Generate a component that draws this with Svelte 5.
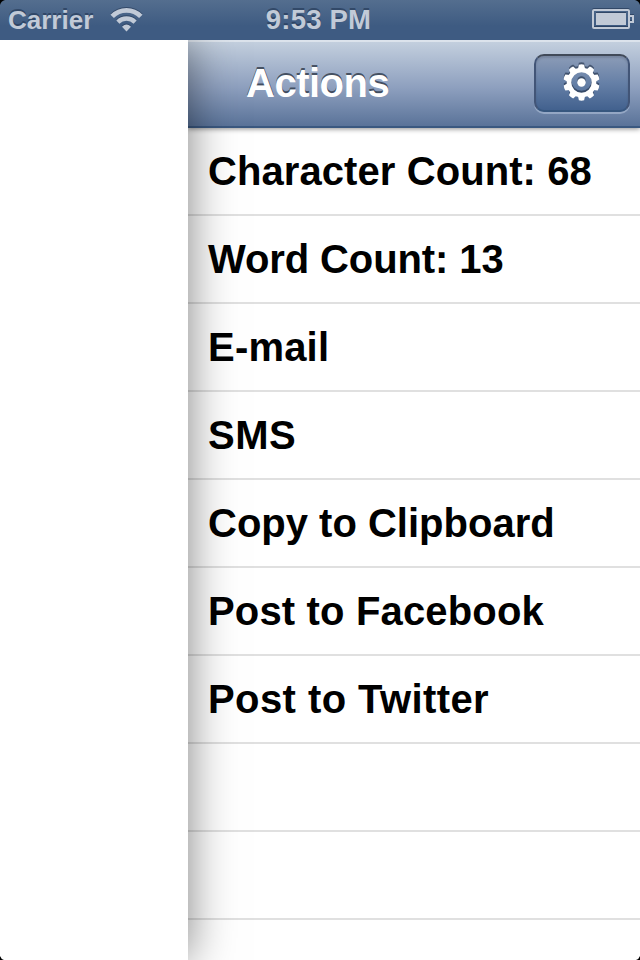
<script>
  const rows = [
    { label: 'Character Count: 68', spacing: 0.08 },
    { label: 'Word Count: 13', spacing: -0.1 },
    { label: 'E-mail', spacing: 0.2 },
    { label: 'SMS', spacing: 0.5 },
    { label: 'Copy to Clipboard', spacing: 0 },
    { label: 'Post to Facebook', spacing: 0.16 },
    { label: 'Post to Twitter', spacing: 0.42 },
    { label: '', spacing: 0 },
    { label: '', spacing: 0 },
    { label: '', spacing: 0 }
  ];
  const teeth = Array.from({ length: 10 }, (_, i) => i * 36);
</script>

<div class="screen">
  <header class="status">
    <div class="left">
      <span class="carrier">Carrier</span>
      <svg class="wifi" width="34" height="26" viewBox="0 0 34 26" fill="none" stroke="#c1cad7">
        <path d="M2.2 9.4A20 20 0 0 1 30.8 9.4" stroke-width="4.8" />
        <path d="M7.9 15.1A12.2 12.2 0 0 1 25.1 15.1" stroke-width="4.4" />
        <path d="M16.5 24.4L12 19.7Q16.5 15.4 21 19.7Z" fill="#c1cad7" stroke="none" />
      </svg>
    </div>
    <span class="time">9:53 PM</span>
    <svg class="battery" width="44" height="24" viewBox="0 0 44 24">
      <rect x="1" y="2" width="36" height="18" rx="1" fill="none" stroke="#c1cad7" stroke-width="2" />
      <rect x="4" y="5" width="30" height="12" fill="#c1cad7" />
      <path d="M38 8H41V14H38" fill="none" stroke="#c1cad7" stroke-width="2" />
    </svg>
  </header>

  <main class="body">
    <div class="front"></div>
    <section class="actions">
      <nav>
        <h1>Actions</h1>
        <button aria-label="Settings">
          <svg class="gear" width="40" height="40" viewBox="-19.5 -19.5 40 40">
            <circle r="12.5" fill="none" stroke="#fff" stroke-width="4.6" />
            {#each teeth as angle}
              <path d="M-3.6 -13.5L-2.6 -17.8Q0 -18.6 2.6 -17.8L3.6 -13.5Z" fill="#fff" transform="rotate({angle})" />
            {/each}
            <circle r="4.2" fill="#fff" />
          </svg>
        </button>
      </nav>
      <ul>
        {#each rows as row}
          <li><span style="letter-spacing: {row.spacing}px">{row.label}</span></li>
        {/each}
      </ul>
    </section>
  </main>
  <svg class="corners" width="640" height="960" viewBox="0 0 640 960">
    <path d="M0 0H5Q1 1 0 5ZM640 0H635Q639 1 640 5ZM0 960V956Q1 959 4 960ZM640 960V956Q639 959 636 960Z" />
  </svg>
</div>

<style>
  :global(body) { margin: 0; }
  .screen {
    position: relative;
    width: 640px;
    height: 960px;
    overflow: hidden;
    display: flex;
    flex-direction: column;
    background: #fff;
    font-family: "Liberation Sans", Arial, sans-serif;
    font-weight: bold;
  }
  .status {
    position: relative;
    z-index: 3;
    box-sizing: border-box;
    flex: 0 0 40px;
    display: grid;
    grid-template-columns: 1fr auto 1fr;
    align-items: center;
    padding: 0 6px 0 2px;
    background: linear-gradient(#546e8f, #3e5b82 65%, #3e5b82);
    color: #c1cad7;
    font-size: 26px;
    line-height: 40px;
    text-shadow: 0 -2px 0 rgba(35, 55, 85, 0.65);
  }
  .left { display: flex; align-items: center; gap: 16.5px; padding-left: 6px; }
  .time { font-size: 27.5px; letter-spacing: 0.2px; padding-left: 1px; }
  .wifi, .battery { filter: drop-shadow(0 -1px 0 rgba(35, 55, 85, 0.65)); }
  .battery { justify-self: end; margin-right: -2px; }
  .body { flex: 1; display: flex; min-height: 0; }
  .front {
    position: relative;
    z-index: 2;
    flex: 0 0 640px;
    margin-left: -452px;
    background: #fff;
    box-shadow: 0 0 44px rgba(0, 0, 0, 0.5);
  }
  .actions { flex: 0 0 452px; display: flex; flex-direction: column; }
  nav {
    position: relative;
    z-index: 1;
    box-sizing: border-box;
    flex: 0 0 88px;
    display: flex;
    align-items: center;
    justify-content: space-between;
    padding: 0 10px 2px 58px;
    background: linear-gradient(#c3cfde, #8d9fbe 55%, #5a7399);
    border-top: 2px solid #dce3ec;
    border-bottom: 2px solid #3a5880;
    box-shadow: 0 1px 5px rgba(0, 0, 0, 0.45);
  }
  h1 {
    margin: 0;
    font-size: 40px;
    letter-spacing: -0.5px;
    line-height: 46px;
    color: #fff;
    text-shadow: 0 -2px 0 rgba(40, 50, 65, 0.75);
  }
  button {
    box-sizing: border-box;
    width: 96px;
    height: 58px;
    padding: 0;
    display: flex;
    align-items: center;
    justify-content: center;
    border: 2px solid;
    border-color: #414a59 #425577 #37577f;
    border-radius: 10px;
    background: linear-gradient(#8c9cb7, #6680a7 50%, #42618e);
    box-shadow: 0 2px 0 rgba(175, 192, 217, 0.6), inset 0 2px 2px rgba(40, 50, 70, 0.2);
  }
  .gear { filter: drop-shadow(0 -2px 0 rgba(35, 50, 75, 0.65)); }
  ul { flex: 1; margin: 0; padding: 0; list-style: none; overflow: hidden; }
  li {
    box-sizing: border-box;
    height: 88px;
    padding-left: 20px;
    border-bottom: 2px solid #e0e0e0;
    color: #000;
    font-size: 40px;
    line-height: 87px;
    white-space: nowrap;
  }
  .corners { position: absolute; inset: 0; z-index: 4; pointer-events: none; }
</style>
